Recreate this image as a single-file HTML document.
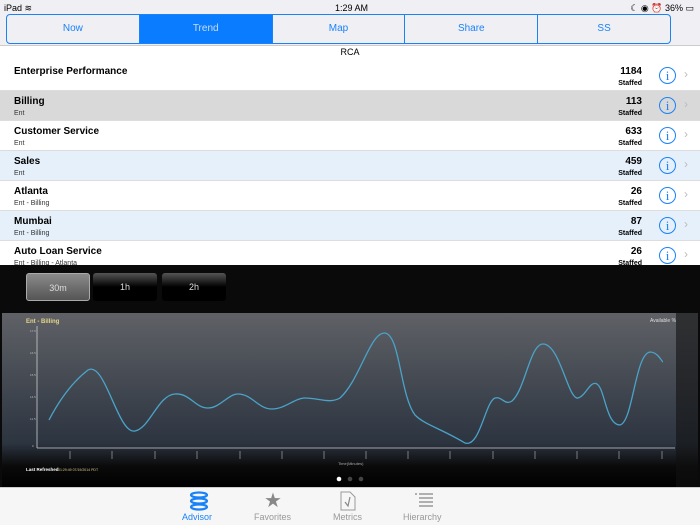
<!DOCTYPE html>
<html><head><meta charset="utf-8"><style>
*{margin:0;padding:0;box-sizing:border-box}
body{width:700px;height:525px;overflow:hidden;background:#fff;font-family:"Liberation Sans",sans-serif;position:relative}
.status{position:absolute;top:0;left:0;width:700px;height:15px;background:#efeff4;font-size:9px;color:#000}
.seg{position:absolute;top:14px;left:6px;width:665px;height:30px;border:1px solid #1a82f7;border-radius:4px;display:flex;overflow:hidden;background:#efeff4}
.seg div{flex:1;text-align:center;line-height:28px;font-size:10px;color:#1a82f7;border-right:1px solid #1a82f7}
.seg div:last-child{border-right:none}
.seg .on{background:#0a7cff;color:#cde}
.topbg{position:absolute;top:0;left:0;width:700px;height:46px;background:#efeff4;border-bottom:1px solid #ccc}
.rca{position:absolute;top:46px;left:0;width:700px;text-align:center;font-size:9px;line-height:12px}
.row{position:absolute;left:0;width:700px;height:30px;border-bottom:1px solid #ddd}
.row .t{position:absolute;left:14px;top:5px;font-size:10px;font-weight:bold}
.row .s{position:absolute;left:14px;top:19px;font-size:7px;color:#333}
.row .n{position:absolute;right:58px;top:5px;font-size:10px;font-weight:bold}
.row .st{position:absolute;right:58px;top:19px;font-size:7px;font-weight:bold}
.row .i{position:absolute;left:659px;top:6px;width:17px;height:17px;border:1.3px solid #1a82f7;border-radius:50%;color:#1a82f7;font-family:"Liberation Serif",serif;font-size:13px;text-align:center;line-height:15px}
.row .c{position:absolute;left:684px;top:6px;color:#bbb;font-size:12px}
.dark{position:absolute;top:265px;left:0;width:700px;height:222px;background:#0a0a0a}
.btn{position:absolute;top:273px;height:28px;width:64px;border-radius:3px;color:#ddd;font-size:9px;text-align:center;line-height:28px}
.tab{position:absolute;top:487px;left:0;width:700px;height:38px;background:#f6f6f6;border-top:1px solid #ccc}
.tab span{position:absolute;top:24px;font-size:9px;color:#999}
</style></head><body>
<div class="topbg"></div>
<div class="status"><span style="position:absolute;left:4px;top:3px">iPad ≋</span><span style="position:absolute;left:335px;top:3px">1:29 AM</span><span style="position:absolute;right:6px;top:3px">☾ ◉ ⏰ 36% ▭</span></div>
<div class="seg"><div>Now</div><div class="on">Trend</div><div>Map</div><div>Share</div><div>SS</div></div>
<div class="rca">RCA</div>
<div class="row" style="top:61px;background:#fff"><div class="t">Enterprise Performance</div><div class="n">1184</div><div class="st">Staffed</div><div class="i">i</div><div class="c">›</div></div>
<div class="row" style="top:91px;background:#d9d9d9"><div class="t">Billing</div><div class="s">Ent</div><div class="n">113</div><div class="st">Staffed</div><div class="i">i</div><div class="c">›</div></div>
<div class="row" style="top:121px;background:#fff"><div class="t">Customer Service</div><div class="s">Ent</div><div class="n">633</div><div class="st">Staffed</div><div class="i">i</div><div class="c">›</div></div>
<div class="row" style="top:151px;background:#e5f0fb"><div class="t">Sales</div><div class="s">Ent</div><div class="n">459</div><div class="st">Staffed</div><div class="i">i</div><div class="c">›</div></div>
<div class="row" style="top:181px;background:#fff"><div class="t">Atlanta</div><div class="s">Ent - Billing</div><div class="n">26</div><div class="st">Staffed</div><div class="i">i</div><div class="c">›</div></div>
<div class="row" style="top:211px;background:#e5f0fb"><div class="t">Mumbai</div><div class="s">Ent - Billing</div><div class="n">87</div><div class="st">Staffed</div><div class="i">i</div><div class="c">›</div></div>
<div class="row" style="top:241px;background:#fff"><div class="t">Auto Loan Service</div><div class="s">Ent - Billing - Atlanta</div><div class="n">26</div><div class="st">Staffed</div><div class="i">i</div><div class="c">›</div></div>
<div class="dark"></div>
<div class="btn" style="left:26px;background:linear-gradient(#8a8a8a,#555);border:1px solid #aaa">30m</div>
<div class="btn" style="left:93px;background:linear-gradient(#555,#000 50%);">1h</div>
<div class="btn" style="left:162px;background:linear-gradient(#555,#000 50%);">2h</div>
<svg style="position:absolute;left:0;top:310px" width="700" height="177">
<defs><linearGradient id="g" x1="0" y1="0" x2="0" y2="1"><stop offset="0" stop-color="#5f6166"/><stop offset="0.75" stop-color="#2c3440"/><stop offset="0.88" stop-color="#0a0a0a"/><stop offset="1" stop-color="#000"/></linearGradient></defs>
<rect x="2" y="3" width="696" height="174" fill="url(#g)"/>
<rect x="676" y="3" width="22" height="174" fill="#111" opacity="0.6"/>
<text x="26" y="13" font-size="6" fill="#e6d58a" font-weight="bold">Ent - Billing</text>
<text x="650" y="12" font-size="5" fill="#ddd">Available %</text>
<line x1="37" y1="16" x2="37" y2="138" stroke="#ccc" stroke-width="0.8"/>
<line x1="37" y1="138" x2="675" y2="138" stroke="#ccc" stroke-width="0.8"/>
<path d="M49,110 C62,85 75,70 88,60 C105,50 118,125 135,121 C150,118 158,85 175,84 C190,83 195,98 208,98 C220,98 228,84 238,84 C252,84 258,99 272,99 C285,99 295,88 305,88 C318,88 330,94 340,88 C360,70 370,22 385,23 C400,25 400,85 415,105 C425,115 440,118 465,133 C480,138 485,92 495,88 C502,86 505,96 512,91 C525,80 530,34 543,34 C560,34 568,90 578,88 C586,86 590,70 597,74 C605,79 606,115 620,115 C633,112 635,44 650,42 C658,42 662,52 663,52" fill="none" stroke="#4aa3c8" stroke-width="1.3"/>
<g font-size="3" fill="#bbb"><text x="30" y="22">17.5</text><text x="30" y="44">16.5</text><text x="30" y="66">15.5</text><text x="30" y="88">14.5</text><text x="30" y="110">11.5</text><text x="32" y="137">0</text></g>
<g stroke="#bbb" stroke-width="0.6"><line x1="70" y1="141" x2="70" y2="149"/><line x1="112" y1="141" x2="112" y2="149"/><line x1="155" y1="141" x2="155" y2="149"/><line x1="197" y1="141" x2="197" y2="149"/><line x1="240" y1="141" x2="240" y2="149"/><line x1="282" y1="141" x2="282" y2="149"/><line x1="324" y1="141" x2="324" y2="149"/><line x1="366" y1="141" x2="366" y2="149"/><line x1="408" y1="141" x2="408" y2="149"/><line x1="450" y1="141" x2="450" y2="149"/><line x1="493" y1="141" x2="493" y2="149"/><line x1="535" y1="141" x2="535" y2="149"/><line x1="577" y1="141" x2="577" y2="149"/><line x1="619" y1="141" x2="619" y2="149"/><line x1="662" y1="141" x2="662" y2="149"/></g>
<text x="338" y="155" font-size="4" fill="#aaa">Time(Minutes)</text>
<text x="26" y="161" font-size="4.5" fill="#fff" font-weight="bold">Last Refreshed</text>
<text x="58" y="161" font-size="3.5" fill="#d8c98a">01:29:49 07/19/2014 PDT</text>
<circle cx="339" cy="169" r="2.3" fill="#fff"/><circle cx="350" cy="169" r="2.3" fill="#444"/><circle cx="361" cy="169" r="2.3" fill="#444"/>
</svg>
<div class="tab">
<svg style="position:absolute;left:188px;top:3px" width="22" height="20"><g fill="none" stroke="#1a82f7" stroke-width="2.2"><ellipse cx="11" cy="4" rx="8" ry="2.5"/><ellipse cx="11" cy="10" rx="8" ry="2.5"/><ellipse cx="11" cy="16" rx="8" ry="2.5"/></g></svg>
<div style="position:absolute;left:264px;top:0;font-size:20px;color:#888">★</div>
<svg style="position:absolute;left:340px;top:3px" width="16" height="20"><path d="M1,1 H10 L15,6 V19 H1 Z" fill="none" stroke="#999"/><path d="M5,11 L8,15 L10,6" fill="none" stroke="#888" stroke-width="1.2"/></svg>
<svg style="position:absolute;left:414px;top:4px" width="20" height="16"><g stroke="#999" stroke-width="1.5"><line x1="1" y1="2" x2="3" y2="2"/><line x1="5" y1="2" x2="19" y2="2"/><line x1="5" y1="6" x2="19" y2="6"/><line x1="5" y1="10" x2="19" y2="10"/><line x1="5" y1="14" x2="19" y2="14"/></g></svg>
<span style="left:182px;color:#1a82f7">Advisor</span><span style="left:254px">Favorites</span><span style="left:333px">Metrics</span><span style="left:403px">Hierarchy</span>
</div>
</body></html>
